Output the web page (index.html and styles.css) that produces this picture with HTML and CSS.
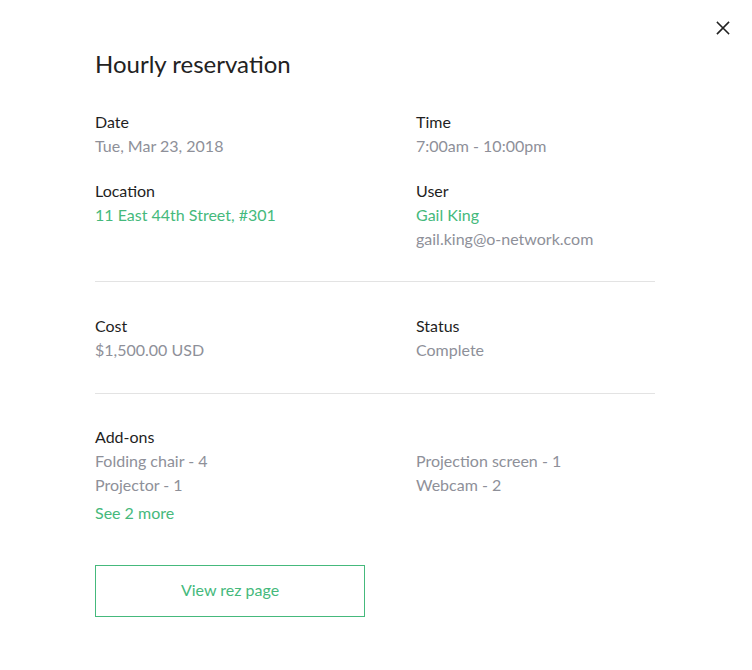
FILE: index.html
```html
<!DOCTYPE html>
<html>
<head>
<meta charset="utf-8">
<link rel="stylesheet" href="styles.css">
</head>
<body>
<div class="modal">
  <button class="close" aria-label="Close">
    <svg width="14" height="14" viewBox="0 0 14 14"><path d="M1.5 1.5L12.5 12.5M12.5 1.5L1.5 12.5" stroke="#222" stroke-width="1.6" stroke-linecap="square"/></svg>
  </button>
  <h1 class="title">Hourly reservation</h1>
  <div class="grid first">
    <div class="field">
      <div class="label">Date</div>
      <div class="value">Tue, Mar 23, 2018</div>
    </div>
    <div class="field">
      <div class="label">Time</div>
      <div class="value">7:00am - 10:00pm</div>
    </div>
    <div class="field">
      <div class="label">Location</div>
      <div class="value link">11 East 44th Street, #301</div>
    </div>
    <div class="field">
      <div class="label">User</div>
      <div class="value link">Gail King</div>
      <div class="value">gail.king@o-network.com</div>
    </div>
  </div>
  <hr class="divider">
  <div class="grid">
    <div class="field">
      <div class="label">Cost</div>
      <div class="value">$1,500.00 USD</div>
    </div>
    <div class="field">
      <div class="label">Status</div>
      <div class="value">Complete</div>
    </div>
  </div>
  <hr class="divider second">
  <div class="grid">
    <div class="field">
      <div class="label">Add-ons</div>
      <div class="value">Folding chair - 4</div>
      <div class="value">Projector - 1</div>
      <div class="value link more">See 2 more</div>
    </div>
    <div class="field">
      <div class="label">&nbsp;</div>
      <div class="value">Projection screen - 1</div>
      <div class="value">Webcam - 2</div>
    </div>
  </div>
  <button class="btn">View rez page</button>
</div>
</body>
</html>
```
FILE: styles.css
```css
* { box-sizing: border-box; }
html, body { margin: 0; padding: 0; background: #fff; }
body {
  font-family: Lato, "Open Sans", sans-serif;
  color: #1f1f1f;
  width: 752px;
  height: 670px;
}
.modal {
  position: relative;
  padding: 46px 97px 0 95px;
}
.close {
  position: absolute;
  top: 21px;
  left: 716px;
  width: 14px;
  height: 14px;
  padding: 0;
  border: 0;
  background: none;
  display: block;
}
.close svg { display: block; }
.title {
  margin: 0 0 28px;
  font-size: 24px;
  font-weight: 400;
  line-height: 36px;
  color: #222;
}
.grid {
  display: grid;
  grid-template-columns: 321px 1fr;
  row-gap: 21px;
  font-size: 16px;
  line-height: 24px;
}
.label { color: #1f1f1f; }
.value { color: #8e9099; }
.link { color: #45b97c; }
.more { margin-top: 4px; }
.divider {
  border: 0;
  border-top: 1px solid #e3e3e3;
  margin: 30px 0 32px;
  height: 0;
}
.divider.second { margin: 31px 0 31px; }
.btn {
  display: block;
  margin-top: 40px;
  width: 270px;
  height: 52px;
  border: 1px solid #45b97c;
  background: #fff;
  color: #45b97c;
  font-family: inherit;
  font-size: 16px;
  padding: 0 0 3px;
}
```
